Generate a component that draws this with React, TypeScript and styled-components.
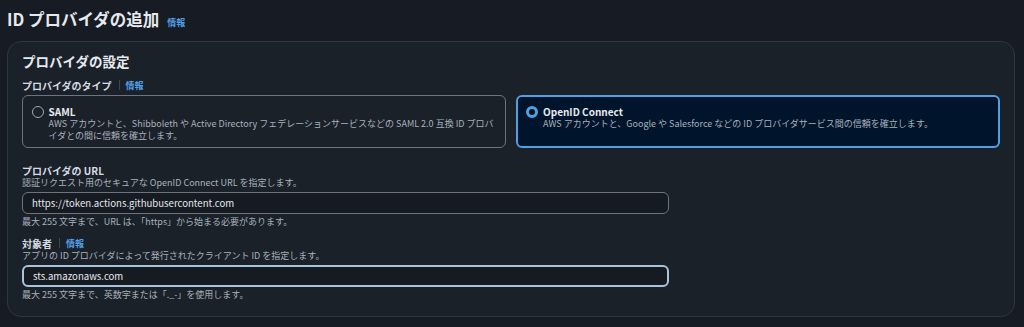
import React, { useState } from "react";
import styled, { createGlobalStyle } from "styled-components";

const GlobalStyle = createGlobalStyle`
  body {
    margin: 0;
    background: #171c24;
    font-family: "Noto Sans CJK JP", "Noto Sans", sans-serif;
    color: #d5dbe3;
  }
`;

const Page = styled.div`
  padding: 8px 9px 10px 7px;
`;

const TitleRow = styled.div`
  display: flex;
  align-items: baseline;
  gap: 8px;
`;

const PageTitle = styled.h1`
  margin: 0;
  font-size: 16.5px;
  line-height: 22px;
  font-weight: 700;
  color: #e6e9ee;
`;

const InfoLink = styled.a`
  font-size: 9px;
  font-weight: 700;
  color: #539fe5;
  text-decoration: none;
`;

const Card = styled.section`
  margin-top: 11px;
  border: 1px solid #30363f;
  border-radius: 14px;
  background: #1b2129;
  padding: 10px 14px 15px 14px;
`;

const CardTitle = styled.h2`
  margin: 0;
  font-size: 13.5px;
  line-height: 18px;
  font-weight: 700;
  color: #e6e9ee;
`;

const LabelRow = styled.div<{ $gap?: number }>`
  display: flex;
  align-items: center;
  margin-top: ${(p) => p.$gap ?? 8}px;
  height: 14px;
`;

const Label = styled.span`
  font-size: 10px;
  font-weight: 700;
  color: #d5dbe3;
`;

const Divider = styled.span`
  width: 1px;
  height: 10px;
  background: #414750;
  margin: 0 6px 0 7px;
`;

const TileGrid = styled.div`
  display: grid;
  grid-template-columns: 1fr 1fr;
  gap: 10px;
  margin-top: 3px;
`;

const Tile = styled.label<{ $selected: boolean }>`
  display: flex;
  align-items: flex-start;
  gap: 5px;
  min-height: 53px;
  box-sizing: border-box;
  border: ${(p) => (p.$selected ? "2px solid #539fe5" : "1.5px solid #6b7480")};
  border-radius: 6px;
  background: ${(p) => (p.$selected ? "#00142b" : "transparent")};
  padding: ${(p) => (p.$selected ? "8px 8px 5px 8px" : "8.5px 8.5px 5.5px 8.5px")};
  cursor: pointer;
`;

const Radio = styled.span<{ $checked: boolean }>`
  flex: none;
  width: 12px;
  height: 12px;
  box-sizing: border-box;
  margin-top: 1px;
  border-radius: 50%;
  border: ${(p) => (p.$checked ? "3.5px solid #539fe5" : "1.5px solid #a0a8b3")};
  background: ${(p) => (p.$checked ? "#0f141a" : "transparent")};
`;

const TileText = styled.div`
  display: flex;
  flex-direction: column;
`;

const TileTitle = styled.span`
  font-size: 10px;
  line-height: 13px;
  font-weight: 700;
  color: #e6e9ee;
`;

const Description = styled.span`
  font-size: 9px;
  line-height: 12px;
  color: #a8b1bc;
`;

const FieldDescription = styled(Description)`
  display: block;
`;

const Input = styled.input<{ $focused?: boolean }>`
  display: block;
  box-sizing: border-box;
  width: 647px;
  height: 22px;
  margin-top: 3px;
  padding: 0 9px;
  border-radius: 6px;
  border: ${(p) => (p.$focused ? "2px solid #a8c4dd" : "1.5px solid #6b7480")};
  background: #161b22;
  color: #e6e9ee;
  font-family: inherit;
  font-size: 9.6px;
  outline: none;
`;

const Help = styled(Description)`
  display: block;
  margin-top: 2px;
`;

type ProviderType = "saml" | "oidc";

const providers: { id: ProviderType; title: string; desc: string }[] = [
  {
    id: "saml",
    title: "SAML",
    desc: "AWS アカウントと、Shibboleth や Active Directory フェデレーションサービスなどの SAML 2.0 互換 ID プロバイダとの間に信頼を確立します。",
  },
  {
    id: "oidc",
    title: "OpenID Connect",
    desc: "AWS アカウントと、Google や Salesforce などの ID プロバイダサービス間の信頼を確立します。",
  },
];

const App: React.FC = () => {
  const [type, setType] = useState<ProviderType>("oidc");
  const [url, setUrl] = useState("https://token.actions.githubusercontent.com");
  const [audience, setAudience] = useState("sts.amazonaws.com");

  return (
    <Page>
      <GlobalStyle />
      <TitleRow>
        <PageTitle>ID プロバイダの追加</PageTitle>
        <InfoLink href="#">情報</InfoLink>
      </TitleRow>

      <Card>
        <CardTitle>プロバイダの設定</CardTitle>

        <LabelRow>
          <Label>プロバイダのタイプ</Label>
          <Divider />
          <InfoLink href="#">情報</InfoLink>
        </LabelRow>
        <TileGrid>
          {providers.map((p) => (
            <Tile
              key={p.id}
              $selected={type === p.id}
              onClick={() => setType(p.id)}
            >
              <Radio $checked={type === p.id} />
              <TileText>
                <TileTitle>{p.title}</TileTitle>
                <Description>{p.desc}</Description>
              </TileText>
            </Tile>
          ))}
        </TileGrid>

        <LabelRow $gap={15}>
          <Label>プロバイダの URL</Label>
        </LabelRow>
        <FieldDescription>
          認証リクエスト用のセキュアな OpenID Connect URL を指定します。
        </FieldDescription>
        <Input value={url} onChange={(e) => setUrl(e.target.value)} />
        <Help>最大 255 文字まで、URL は、「https」から始まる必要があります。</Help>

        <LabelRow $gap={8}>
          <Label>対象者</Label>
          <Divider />
          <InfoLink href="#">情報</InfoLink>
        </LabelRow>
        <FieldDescription>
          アプリの ID プロバイダによって発行されたクライアント ID を指定します。
        </FieldDescription>
        <Input
          $focused
          value={audience}
          onChange={(e) => setAudience(e.target.value)}
        />
        <Help>最大 255 文字まで、英数字または「._-」を使用します。</Help>
      </Card>
    </Page>
  );
};

export default App;
